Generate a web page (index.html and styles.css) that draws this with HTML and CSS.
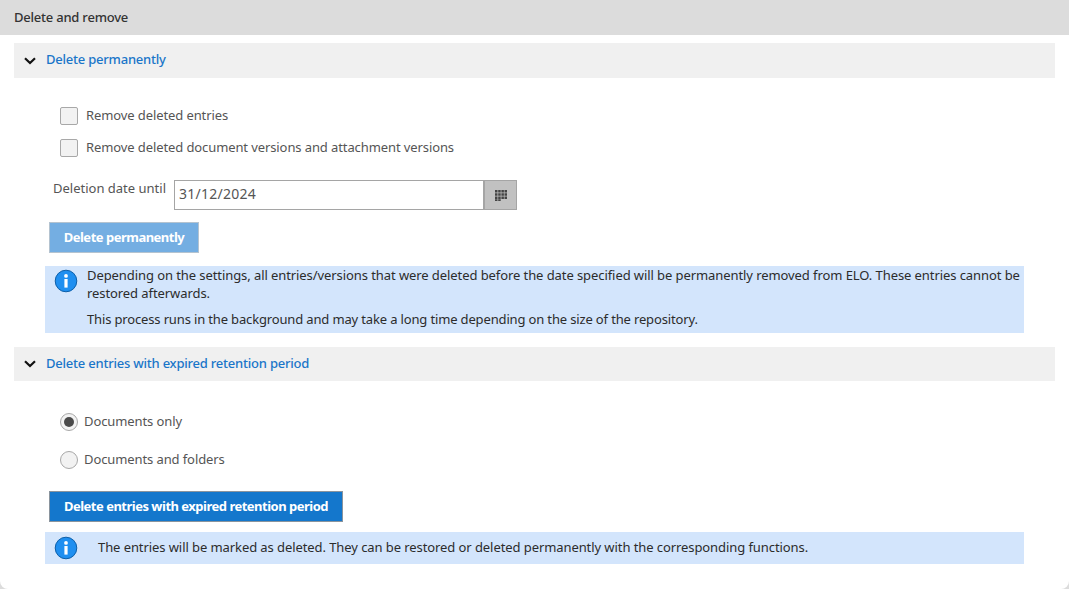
FILE: index.html
```html
<!DOCTYPE html>
<html lang="en">
<head>
<meta charset="utf-8">
<title>Delete and remove</title>
<link rel="stylesheet" href="styles.css">
</head>
<body>
<main class="panel">
  <header class="panel-title">Delete and remove</header>
  <section class="section">
    <div class="section-head">
      <svg class="chevron" viewBox="0 0 12 8"><path d="M1 1.2 6 6 11 1.2" /></svg>
      <span class="head-text">Delete permanently</span>
    </div>
    <div class="checks">
      <label class="check"><span class="box"></span><span class="opt-text">Remove deleted entries</span></label>
      <label class="check"><span class="box"></span><span class="opt-text">Remove deleted document versions and attachment versions</span></label>
    </div>
    <div class="date-row">
      <span class="date-label">Deletion date until</span>
      <div class="date-field">
        <span class="date-value">31/12/2024</span>
        <span class="date-btn">
          <svg viewBox="0 0 12 11" class="cal"><path d="M0 0h2.5v2.5H0zM3.2 0h2.5v2.5H3.2zM6.4 0h2.5v2.5H6.4zM9.5 0H12v2.5H9.5zM0 3.2h2.5v2.5H0zM3.2 3.2h2.5v2.5H3.2zM6.4 3.2h2.5v2.5H6.4zM9.5 3.2H12v2.5H9.5zM0 6.4h2.5v2.5H0zM3.2 6.4h2.5v2.5H3.2zM6.4 6.4h2.5v2.5H6.4zM9.5 6.4H12v2.5H9.5zM0 9.3h2.5V11H0zM3.2 9.3h2.5V11H3.2z"/></svg>
        </span>
      </div>
    </div>
    <button class="btn btn-disabled">Delete permanently</button>
    <div class="info info-tall">
      <svg class="info-icon" viewBox="0 0 24 24"><circle cx="12" cy="12" r="10.8"/><rect x="10.4" y="10" width="3.2" height="8.6"/><circle cx="12" cy="6.9" r="1.9" class="dot"/></svg>
      <div class="info-text">
        <p class="info-first">Depending on the settings, all entries/versions that were deleted before the date specified will be permanently removed from ELO. These entries cannot be restored afterwards.</p>
        <p class="info-second">This process runs in the background and may take a long time depending on the size of the repository.</p>
      </div>
    </div>
  </section>
  <section class="section section-second">
    <div class="section-head section-head-short">
      <svg class="chevron" viewBox="0 0 12 8"><path d="M1 1.2 6 6 11 1.2" /></svg>
      <span class="head-text head-text-short">Delete entries with expired retention period</span>
    </div>
    <div class="radios">
      <label class="radio"><span class="round on"></span><span class="opt-text">Documents only</span></label>
      <label class="radio"><span class="round"></span><span class="opt-text">Documents and folders</span></label>
    </div>
    <button class="btn btn-primary"><span class="btn-text">Delete entries with expired retention period</span></button>
    <div class="info info-short">
      <svg class="info-icon" viewBox="0 0 24 24"><circle cx="12" cy="12" r="10.8"/><rect x="10.4" y="10" width="3.2" height="8.6"/><circle cx="12" cy="6.9" r="1.9" class="dot"/></svg>
      <p class="info-line">The entries will be marked as deleted. They can be restored or deleted permanently with the corresponding functions.</p>
    </div>
  </section>
</main>
</body>
</html>
```

FILE: styles.css
```css
* { box-sizing: border-box; }
html, body { margin: 0; height: 100%; }
body {
  background: #dcdcdc;
  font-family: "Noto Sans", "Liberation Sans", sans-serif;
  font-size: 13px;
  letter-spacing: -.1px;
  color: #555;
  overflow: hidden;
}
.panel {
  width: 1069px;
  height: 589px;
  background: #fff;
  border-radius: 0 0 8px 8px;
  overflow: hidden;
}
.panel-title {
  height: 35px;
  background: #dcdcdc;
  padding-left: 14px;
  line-height: 35px;
  color: #333;
  font-weight: 500;
  letter-spacing: -.22px;
}
.section { margin: 8px 14px 0; }
.section-second { margin-top: 14px; }
.section-head {
  height: 35px;
  background: #f0f0f0;
  display: flex;
  align-items: center;
  gap: 10px;
  padding-left: 10px;
  color: #1a76c9;
  font-weight: 500;
  letter-spacing: -.22px;
}
.head-text { margin-top: -4px; }
.head-text-short { margin-top: -2px; }
.section-head-short { height: 34px; }
.chevron { width: 12px; height: 8px; flex: none; }
.chevron path { fill: none; stroke: #111; stroke-width: 2.2; }
.checks {
  display: flex;
  flex-direction: column;
  gap: 14px;
  padding: 29px 0 0 46px;
}
.check, .radio { display: flex; align-items: center; height: 18px; }
.opt-text { margin-top: -2px; }
.box {
  width: 18px;
  height: 18px;
  margin-right: 8px;
  background: #f2f2f2;
  border: 1px solid #a8a8a8;
  border-radius: 2px;
}
.date-row {
  display: flex;
  margin-top: 23px;
  padding-left: 39px;
}
.date-label { width: 121px; line-height: 17px; letter-spacing: 0; }
.date-field {
  width: 343px;
  height: 30px;
  display: flex;
  border: 1px solid #a5a5a5;
  background: #fff;
}
.date-value { flex: 1; padding-left: 4px; line-height: 25px; font-size: 14px; letter-spacing: .25px; }
.date-btn {
  width: 33px;
  background: #c1c1c1;
  border-left: 2px solid #a5a5a5;
  display: flex;
  align-items: center;
  justify-content: center;
}
.cal { width: 12px; height: 11px; fill: #444; }
.btn {
  display: block;
  margin: 12px 0 0 35px;
  height: 31px;
  padding: 0 0 2px;
  font: 700 13px "Noto Sans", "Liberation Sans", sans-serif;
  letter-spacing: -.5px;
  color: #fff;
  border: 1px solid #a9b4bf;
}
.btn-disabled { width: 150px; background: #74aee2; border-color: #b4c3d0; }
.btn-primary { width: 294px; background: #1477cc; border-color: #8a949d; margin-top: 0; }
.info {
  margin: 13px 0 0 31px;
  width: 979px;
  background: #d3e5fc;
  color: #2c2c2c;
  display: flex;
}
.info-tall { height: 67px; padding: 0 0 0 9px; }
.info-short { height: 32px; margin-top: 10px; padding-left: 9px; align-items: center; }
.info-icon { width: 24px; height: 24px; flex: none; }
.info-tall .info-icon { margin-top: 3px; }
.info-icon circle { fill: #1f8ff0; stroke: #0e5fa8; stroke-width: 1; }
.info-icon rect, .info-icon .dot { fill: #fff; stroke: none; }
.info-text { padding-left: 9px; }
.info-text p { margin: 0; line-height: 18px; }
.info-first { letter-spacing: -.08px; }
.info-text .info-second { margin-top: 8px; letter-spacing: -.15px; }
.info-line { margin: -2px 0 0 20px; letter-spacing: -.08px; }
.radios {
  display: flex;
  flex-direction: column;
  gap: 20px;
  padding: 32px 0 22px 46px;
}
.round {
  width: 18px;
  height: 18px;
  margin-right: 6px;
  border-radius: 50%;
  background: #f2f2f2;
  border: 1px solid #a8a8a8;
  position: relative;
}
.round.on::after {
  content: "";
  position: absolute;
  inset: 3px;
  background: #4a4a4a;
  border-radius: 50%;
}
```
